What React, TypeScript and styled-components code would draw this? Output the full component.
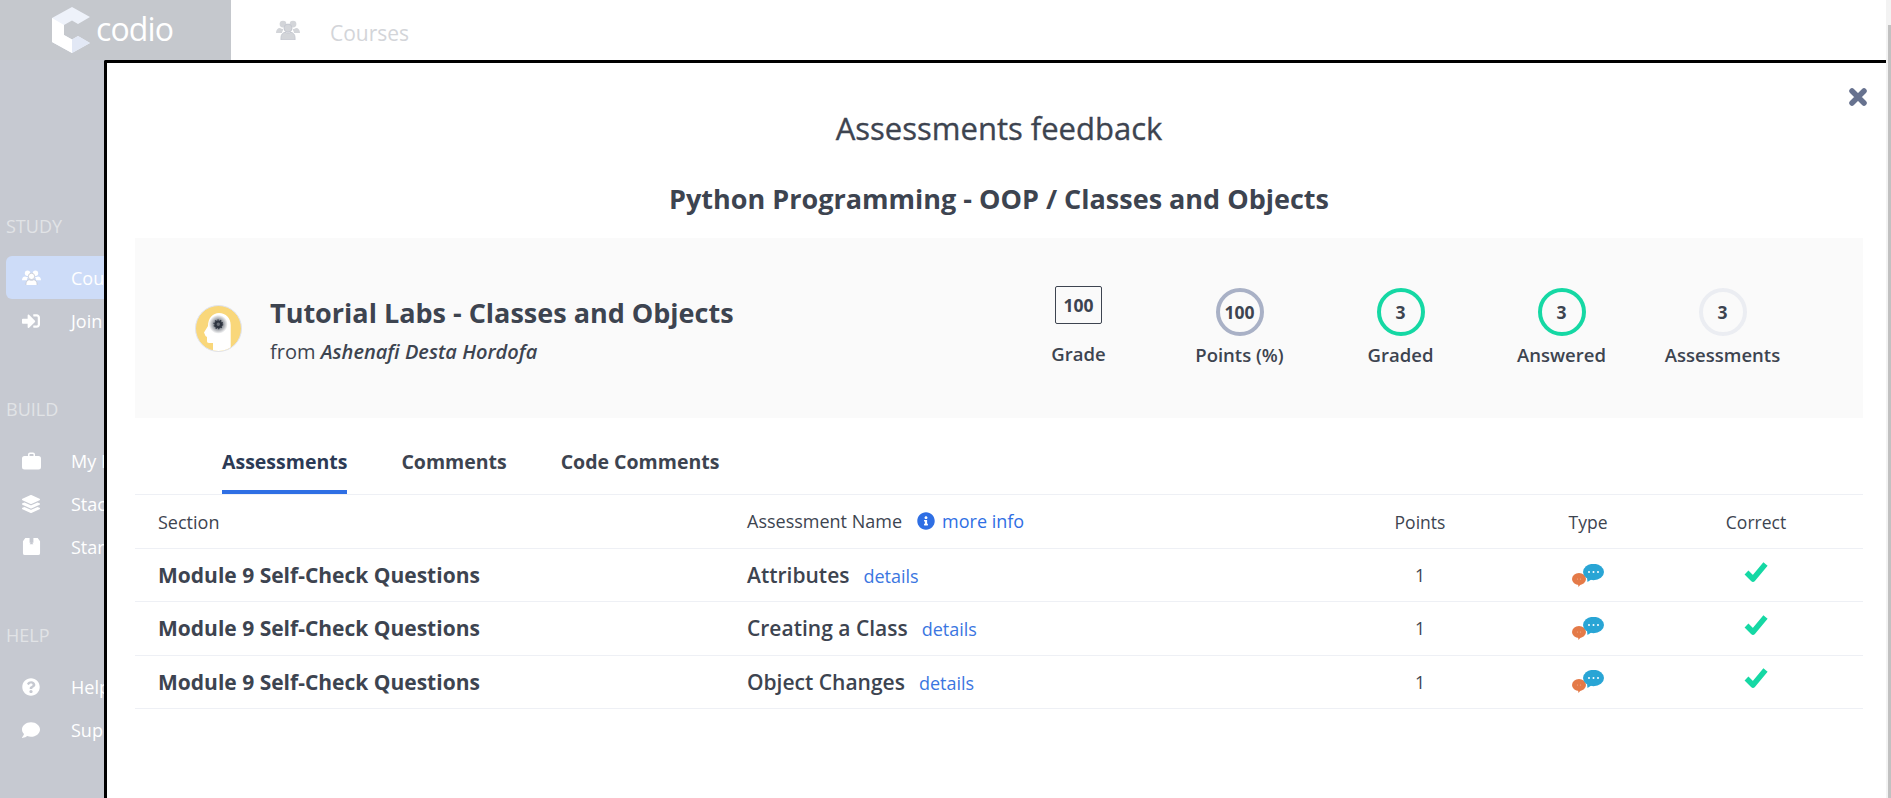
import { FunctionComponent, ReactNode } from "react";
import styled, { createGlobalStyle } from "styled-components";
import {
  FaComment,
  FaInfoCircle,
  FaLayerGroup,
  FaQuestionCircle,
  FaSignInAlt,
} from "react-icons/fa";

const GlobalStyle = createGlobalStyle`
  html, body {
    margin: 0;
    height: 100%;
    overflow: hidden;
    background: #fff;
    font-family: "Open Sans", "Noto Sans", sans-serif;
    color: #3d4450;
  }
  #root { height: 100%; }
  * { box-sizing: border-box; }
`;

const Page = styled.div`
  position: relative;
  display: flex;
  height: 798px;
  overflow: hidden;
`;

const Sidebar = styled.aside`
  flex: 0 0 231px;
  background: #c6c9d1;
  display: flex;
  flex-direction: column;
`;

const LogoBar = styled.div`
  height: 60px;
  background: #c5c8cd;
  display: flex;
  align-items: center;
  padding-left: 52px;
  gap: 4px;
`;

const LogoText = styled.span`
  font-size: 32px;
  font-weight: 500;
  color: #fff;
  letter-spacing: -0.9px;
  line-height: 1;
  margin-top: -2px;
`;

const SideGroup = styled.div<{ top: number }>`
  margin-top: ${(props) => props.top}px;
  display: flex;
  flex-direction: column;
`;

const SideLabel = styled.div`
  font-size: 18px;
  line-height: 22px;
  color: #e1e3e6;
  padding-left: 6px;
  margin-bottom: 19px;
`;

const SideItem = styled.div<{ active?: boolean }>`
  height: 43px;
  margin: 0 6px;
  border-radius: 6px;
  background: ${(props) => (props.active ? "#cddcf8" : "transparent")};
  display: flex;
  align-items: center;
  color: #fff;
  font-size: 18px;
  white-space: nowrap;
`;

const SideIcon = styled.span`
  flex: 0 0 65px;
  display: flex;
  justify-content: center;
  padding-right: 15px;
  font-size: 18px;
`;

const Main = styled.main`
  flex: 1;
  min-width: 0;
`;

const TopBar = styled.div`
  height: 60px;
  display: flex;
  align-items: center;
  padding-left: 45px;
  gap: 30px;
  color: #d3d5d9;
`;

const TopTitle = styled.span`
  font-size: 21px;
  margin-top: 6px;
`;

const ScrollRail = styled.div`
  flex: 0 0 5px;
  background: #f3f3f3;
  display: flex;
  justify-content: flex-end;
`;

const ScrollThumb = styled.div`
  width: 3px;
  margin-top: 25px;
  background: #c1c1c1;
`;

const Modal = styled.section`
  position: absolute;
  left: 104px;
  top: 60px;
  right: 5px;
  bottom: 0;
  background: #fff;
  border-top: 3px solid #000;
  border-left: 3px solid #000;
  border-top-left-radius: 2px;
  padding: 0 23px 0 28px;
`;

const CloseButton = styled.span`
  position: absolute;
  top: 25px;
  right: 19px;
  display: flex;
`;

const ModalTitle = styled.h2`
  margin: 46px 0 0;
  text-align: center;
  font-size: 31px;
  line-height: 38px;
  font-weight: 400;
  -webkit-text-stroke: 0.35px #3d4450;
`;

const CourseTitle = styled.h3`
  margin: 34px 0 0;
  text-align: center;
  font-size: 27px;
  line-height: 36px;
  font-weight: 700;
`;

const InfoPanel = styled.div`
  margin-top: 21px;
  height: 180px;
  background: #fafafa;
  display: flex;
  padding: 0 60px;
`;

const CourseInfo = styled.div`
  flex: 1;
  display: flex;
  align-items: center;
  gap: 28px;
`;

const CourseName = styled.div`
  font-size: 27px;
  line-height: 36px;
  font-weight: 700;
  margin-top: 6px;
`;

const CourseAuthor = styled.div`
  font-size: 20px;
  line-height: 30px;
  margin-top: 6px;
  em {
    font-weight: 600;
  }
`;

const Stats = styled.div`
  display: flex;
  padding-top: 48px;
`;

const Stat = styled.div`
  width: 161px;
  display: flex;
  flex-direction: column;
  align-items: center;
`;

const StatValue = styled.div<{ kind: "box" | "muted" | "green" | "light" }>`
  width: ${(props) => (props.kind === "box" ? "47px" : "48px")};
  height: ${(props) => (props.kind === "box" ? "38px" : "48px")};
  margin-top: ${(props) => (props.kind === "box" ? "0" : "2px")};
  margin-bottom: ${(props) => (props.kind === "box" ? "18px" : "7px")};
  display: flex;
  align-items: center;
  justify-content: center;
  font-size: 17.5px;
  font-weight: 700;
  background: transparent;
  border-radius: ${(props) => (props.kind === "box" ? "2px" : "50%")};
  border: ${(props) =>
    ({
      box: "1px solid #3d4450",
      muted: "4px solid #a9b1c6",
      green: "4px solid #15d8a4",
      light: "4px solid #ebedf2",
    })[props.kind]};
`;

const StatLabel = styled.div`
  font-size: 18.5px;
  line-height: 24px;
  font-weight: 600;
  white-space: nowrap;
`;

const Tabs = styled.nav`
  height: 77px;
  border-bottom: 1px solid #eef0f5;
  display: flex;
  gap: 54px;
  padding-left: 87px;
`;

const Tab = styled.div<{ active?: boolean }>`
  height: 76px;
  padding-top: 30px;
  font-size: 19.5px;
  line-height: 28px;
  font-weight: 700;
  color: ${(props) => (props.active ? "#2b3a55" : "#3d4450")};
  border-bottom: 4px solid ${(props) => (props.active ? "#2f6fe4" : "transparent")};
`;

const Row = styled.div<{ header?: boolean }>`
  height: ${(props) => (props.header ? "54px" : "53.3px")};
  display: grid;
  grid-template-columns: 612px 589px 168px 168px 168px;
  align-items: center;
  border-bottom: 1px solid #eef0f5;
`;

const SectionCell = styled.div<{ bold?: boolean }>`
  padding-left: 23px;
  font-weight: ${(props) => (props.bold ? 700 : 400)};
  font-size: ${(props) => (props.bold ? "21px" : "18px")};
`;

const NameCell = styled.div<{ header?: boolean }>`
  display: flex;
  align-items: center;
  margin-top: ${(props) => (props.header ? "-2px" : "0")};
`;

const AssessmentName = styled.span<{ bold?: boolean }>`
  font-weight: ${(props) => (props.bold ? 600 : 400)};
  font-size: ${(props) => (props.bold ? "21px" : "18px")};
`;

const DetailLink = styled.a`
  color: #3b76e1;
  font-size: 18px;
  margin-left: 14px;
  margin-top: 2px;
`;

const InfoLink = styled.a`
  display: inline-flex;
  align-items: center;
  gap: 7px;
  margin-left: 15px;
  color: #2f6fe4;
  font-size: 18px;
  svg {
    font-size: 18px;
  }
`;

const CenterCell = styled.div`
  display: flex;
  justify-content: center;
  font-size: 17.5px;
`;

const CheckSvg = styled.svg`
  margin-top: -7px;
`;

const CloseIcon: FunctionComponent = () => (
  <svg width="18" height="18" viewBox="0 0 18 18">
    <path d="M3 3l12 12M15 3L3 15" stroke="#67728f" strokeWidth="5.500" strokeLinecap="round" />
  </svg>
);

const CheckIcon: FunctionComponent = () => (
  <CheckSvg width="24" height="22" viewBox="0 0 24 22">
    <path d="M2.500 11.500 9 18 21.500 3" fill="none" stroke="#15d8a4" strokeWidth="5.500" strokeLinejoin="round" />
  </CheckSvg>
);

const UsersIcon: FunctionComponent<{ size: number }> = ({ size }) => (
  <svg width={size} height={size * 0.84} viewBox="0 0 24 20" fill="currentColor">
    <circle cx="7" cy="4" r="3.400" />
    <circle cx="17" cy="4" r="3.400" />
    <path d="M0 13c0-3 1.500-5 4-5 1 .8 2.500 1 3.500.8-.9 1.400-1.400 2.900-1.500 4.200H0z" />
    <path d="M24 13c0-3-1.500-5-4-5-1 .8-2.500 1-3.500.8.900 1.400 1.400 2.900 1.500 4.200H24z" />
    <circle cx="12" cy="8" r="4" stroke="#c6c9d1" strokeWidth="1" />
    <path d="M5 20v-2.500c0-3 2-5 4-5.300 1.800 1 4.200 1 6 0 2 .3 4 2.300 4 5.300V20H5z" stroke="#c6c9d1" strokeWidth="1" />
  </svg>
);

const CaseIcon: FunctionComponent = () => (
  <svg width="19" height="18" viewBox="0 0 19 18" fill="#fff">
    <path d="M6 4V2.500A2 2 0 0 1 8 .5h3a2 2 0 0 1 2 2V4h3.500A2.500 2.500 0 0 1 19 6.500V15a2.500 2.500 0 0 1-2.500 2.500h-14A2.500 2.500 0 0 1 0 15V6.500A2.500 2.500 0 0 1 2.500 4H6zm1.500 0h4V2.500a.5.5 0 0 0-.5-.5H8a.5.5 0 0 0-.5.5V4z" fillRule="evenodd" />
  </svg>
);

const PackageIcon: FunctionComponent = () => (
  <svg width="19" height="19" viewBox="0 0 20 20" fill="#fff">
    <path d="M3.500 1H8v5h4V1h4.500L19 4.500V17a2 2 0 0 1-2 2H3a2 2 0 0 1-2-2V4.500L3.500 1z" />
    <path d="M8 7.500 10 5l2 2.500" fill="#c6c9d1" />
  </svg>
);

const CodioLogo: FunctionComponent = () => (
  <svg width="40" height="46" viewBox="0 0 40 46">
    <path d="M20 0 38 10 26 17 20 13.500 12 18v10l8 4.500 6-3.500 12 7-18 10L0 35V11z" fill="#eef2fa" />
    <path d="M0 11 12 18v10l8 4.500V46L0 35z" fill="#fff" />
    <path d="M20 32.500 26 29l12 7-18 10z" fill="#e2e8f5" />
  </svg>
);

const CourseAvatar: FunctionComponent = () => (
  <svg width="47" height="47" viewBox="0 0 47 47">
    <defs>
      <radialGradient id="halo">
        <stop offset="0.3" stopColor="#6a6f78" />
        <stop offset="1" stopColor="#ffffff" />
      </radialGradient>
      <clipPath id="disc">
        <circle cx="23.500" cy="23.500" r="22.500" />
      </clipPath>
    </defs>
    <circle cx="23.500" cy="23.500" r="23" fill="#f9d77a" stroke="#dfe3ee" strokeWidth="1" />
    <path
      d="M9 27.500 13 21C13 13 18 8 24 8c7 0 11.700 5 11.700 12v27H18v-9h-4c-1.500 0-2-1-2-2v-4l-1.500-1z"
      fill="#fff"
      clipPath="url(#disc)"
    />
    <circle cx="23.300" cy="19.300" r="9.500" fill="url(#halo)" />
    <circle cx="23.300" cy="19.300" r="2.800" fill="none" stroke="#2f3540" strokeWidth="2.200" />
    <circle cx="23.300" cy="19.300" r="4.300" fill="none" stroke="#2f3540" strokeWidth="1.200" strokeDasharray="1.300 1.400" />
  </svg>
);

const ChatIcon: FunctionComponent = () => (
  <svg width="32" height="23" viewBox="0 0 32 23">
    <ellipse cx="7" cy="15" rx="7" ry="6" fill="#e47a48" />
    <path d="M6 20l3 0-2.500 3z" fill="#e47a48" />
    <circle cx="5.500" cy="15" r=".6" fill="#f3b08f" />
    <circle cx="8.500" cy="15" r=".6" fill="#f3b08f" />
    <ellipse cx="21.500" cy="8" rx="10.500" ry="8.200" fill="#29a5d5" />
    <path d="M15 14l5 1-4.500 3z" fill="#29a5d5" />
    <circle cx="17" cy="8" r="1" fill="#fff" />
    <circle cx="21.500" cy="8" r="1" fill="#fff" />
    <circle cx="26" cy="8" r="1" fill="#fff" />
  </svg>
);

interface SideEntry {
  icon: ReactNode;
  label: string;
  active?: boolean;
}

const sideGroups: { title: string; top: number; items: SideEntry[] }[] = [
  {
    title: "STUDY",
    top: 155,
    items: [
      { icon: <UsersIcon size={19} />, label: "Courses", active: true },
      { icon: <FaSignInAlt />, label: "Join Course" },
    ],
  },
  {
    title: "BUILD",
    top: 56,
    items: [
      { icon: <CaseIcon />, label: "My Projects" },
      { icon: <FaLayerGroup />, label: "Stacks" },
      { icon: <PackageIcon />, label: "Starter Packs" },
    ],
  },
  {
    title: "HELP",
    top: 56,
    items: [
      { icon: <FaQuestionCircle />, label: "Help" },
      { icon: <FaComment />, label: "Support" },
    ],
  },
];

const stats: { value: number; label: string; kind: "box" | "muted" | "green" | "light" }[] = [
  { value: 100, label: "Grade", kind: "box" },
  { value: 100, label: "Points (%)", kind: "muted" },
  { value: 3, label: "Graded", kind: "green" },
  { value: 3, label: "Answered", kind: "green" },
  { value: 3, label: "Assessments", kind: "light" },
];

const assessments = ["Attributes", "Creating a Class", "Object Changes"];

export default function App() {
  return (
    <>
      <GlobalStyle />
      <Page>
        <Sidebar>
          <LogoBar>
            <CodioLogo />
            <LogoText>codio</LogoText>
          </LogoBar>
          {sideGroups.map((group) => (
            <SideGroup key={group.title} top={group.top}>
              <SideLabel>{group.title}</SideLabel>
              {group.items.map((item) => (
                <SideItem key={item.label} active={item.active}>
                  <SideIcon>{item.icon}</SideIcon>
                  {item.label}
                </SideItem>
              ))}
            </SideGroup>
          ))}
        </Sidebar>
        <Main>
          <TopBar>
            <UsersIcon size={24} />
            <TopTitle>Courses</TopTitle>
          </TopBar>
        </Main>
        <ScrollRail>
          <ScrollThumb />
        </ScrollRail>
        <Modal>
          <CloseButton>
            <CloseIcon />
          </CloseButton>
          <ModalTitle>Assessments feedback</ModalTitle>
          <CourseTitle>Python Programming - OOP / Classes and Objects</CourseTitle>
          <InfoPanel>
            <CourseInfo>
              <CourseAvatar />
              <div>
                <CourseName>Tutorial Labs - Classes and Objects</CourseName>
                <CourseAuthor>
                  from <em>Ashenafi Desta Hordofa</em>
                </CourseAuthor>
              </div>
            </CourseInfo>
            <Stats>
              {stats.map((stat) => (
                <Stat key={stat.label}>
                  <StatValue kind={stat.kind}>{stat.value}</StatValue>
                  <StatLabel>{stat.label}</StatLabel>
                </Stat>
              ))}
            </Stats>
          </InfoPanel>
          <Tabs>
            <Tab active>Assessments</Tab>
            <Tab>Comments</Tab>
            <Tab>Code Comments</Tab>
          </Tabs>
          <Row header>
            <SectionCell>Section</SectionCell>
            <NameCell header>
              <AssessmentName>Assessment Name</AssessmentName>
              <InfoLink>
                <FaInfoCircle />
                more info
              </InfoLink>
            </NameCell>
            <CenterCell>Points</CenterCell>
            <CenterCell>Type</CenterCell>
            <CenterCell>Correct</CenterCell>
          </Row>
          {assessments.map((name) => (
            <Row key={name}>
              <SectionCell bold>Module 9 Self-Check Questions</SectionCell>
              <NameCell>
                <AssessmentName bold>{name}</AssessmentName>
                <DetailLink>details</DetailLink>
              </NameCell>
              <CenterCell>1</CenterCell>
              <CenterCell>
                <ChatIcon />
              </CenterCell>
              <CenterCell>
                <CheckIcon />
              </CenterCell>
            </Row>
          ))}
        </Modal>
      </Page>
    </>
  );
}
